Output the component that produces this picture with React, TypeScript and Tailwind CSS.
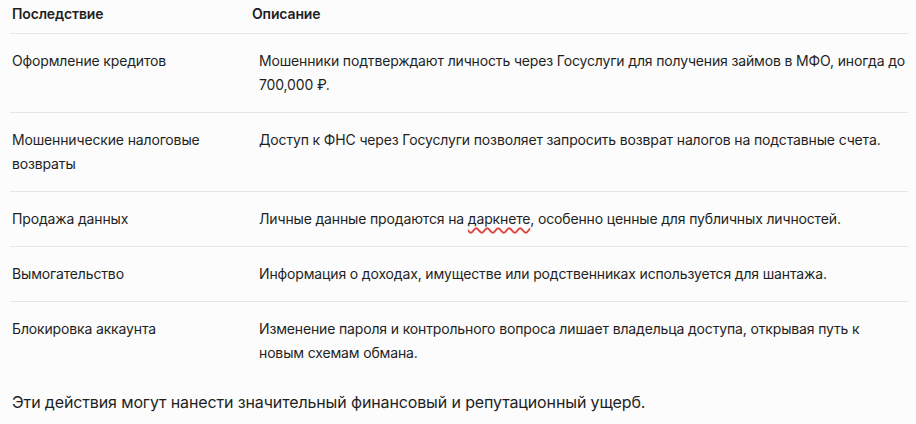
import React from "react";

const rows: { name: string; desc: React.ReactNode }[] = [
  {
    name: "Оформление кредитов",
    desc: "Мошенники подтверждают личность через Госуслуги для получения займов в МФО, иногда до 700,000 ₽.",
  },
  {
    name: "Мошеннические налоговые возвраты",
    desc: "Доступ к ФНС через Госуслуги позволяет запросить возврат налогов на подставные счета.",
  },
  {
    name: "Продажа данных",
    desc: (
      <>
        Личные данные продаются на{" "}
        <span className="underline decoration-wavy decoration-[#e0443e] decoration-[1.5px] underline-offset-[3px]">
          даркнете
        </span>
        , особенно ценные для публичных личностей.
      </>
    ),
  },
  {
    name: "Вымогательство",
    desc: "Информация о доходах, имуществе или родственниках используется для шантажа.",
  },
  {
    name: "Блокировка аккаунта",
    desc: "Изменение пароля и контрольного вопроса лишает владельца доступа, открывая путь к новым схемам обмана.",
  },
];

export default function App() {
  return (
    <div className="w-[916px] h-[424px] overflow-hidden bg-[#fcfcfc] text-[#1f1f1f] font-['Inter','Noto_Sans',sans-serif]">
      <table className="ml-[10px] w-[898px] border-collapse text-[14px] leading-6 tracking-[-0.15px]">
        <thead>
          <tr className="border-b border-[#e6e6e6]">
            <th className="w-[240px] pl-[2px] pt-[2px] pb-[7px] text-left font-semibold">Последствие</th>
            <th className="pl-[2px] pt-[2px] pb-[7px] text-left font-semibold">Описание</th>
          </tr>
        </thead>
        <tbody>
          {rows.map((r, i) => (
            <tr key={i} className={i < rows.length - 1 ? "border-b border-[#e6e6e6]" : ""}>
              <td className="pl-[2px] pr-4 py-[15px] align-top">{r.name}</td>
              <td className="pl-[9px] pr-0 py-[15px] align-top">{r.desc}</td>
            </tr>
          ))}
        </tbody>
      </table>
      <p className="ml-3 mt-[10px] text-[16px] leading-6 tracking-[-0.13px]">
        Эти действия могут нанести значительный финансовый и репутационный ущерб.
      </p>
    </div>
  );
}
